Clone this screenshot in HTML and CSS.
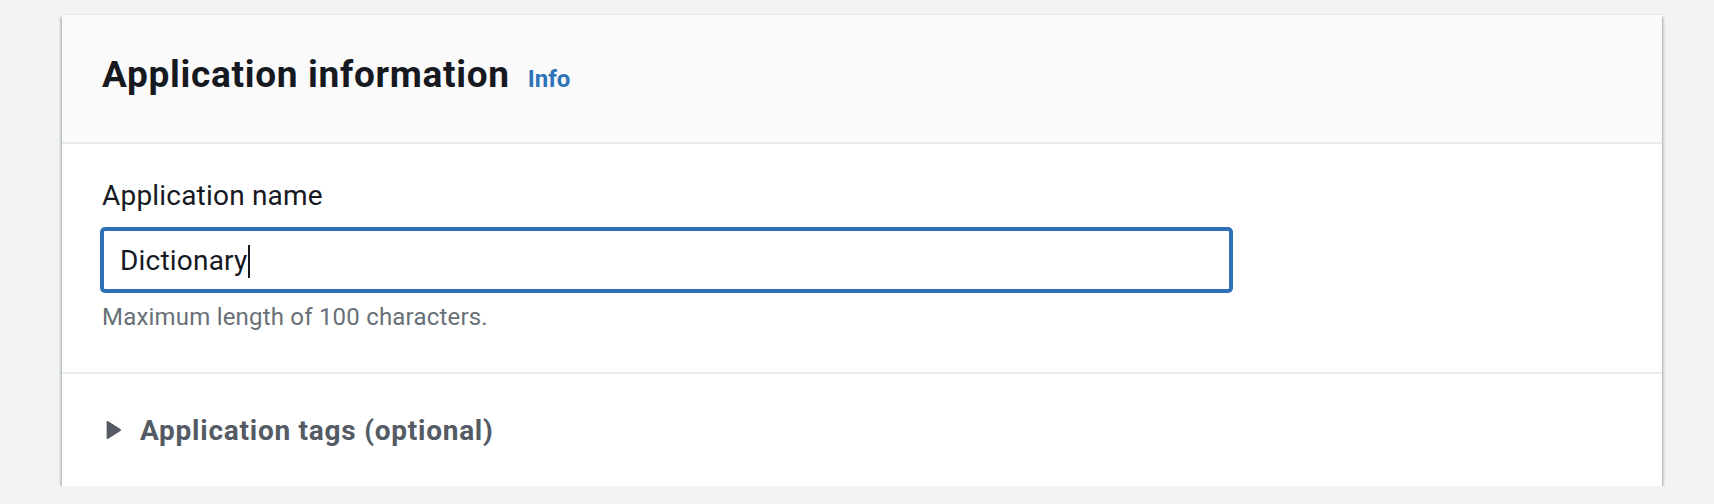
FILE: index.html
```html
<!DOCTYPE html>
<html lang="en">
<head>
<meta charset="utf-8">
<title>Application information</title>
<link rel="stylesheet" href="styles.css">
</head>
<body>
<div class="page">
  <section class="card">
    <header class="card-header">
      <h2 class="card-title"><span class="title-text">Application information</span><a class="info-link" href="#">Info</a></h2>
    </header>
    <div class="card-body">
      <label class="field-label" for="app-name">Application name</label>
      <div class="input" id="app-name"><span class="input-value">Dictionary</span><span class="caret"></span></div>
      <div class="field-hint">Maximum length of 100 characters.</div>
    </div>
    <div class="card-footer">
      <svg class="caret-icon" width="16" height="20" viewBox="0 0 16 20" aria-hidden="true"><path d="M2.3 1.2 L14.4 8.9 Q15.8 10 14.4 11.1 L2.3 18.8 Q0.6 19.7 0.6 17.8 L0.6 2.2 Q0.6 0.3 2.3 1.2 Z" fill="#545b64"/></svg>
      <span class="footer-text">Application tags (optional)</span>
    </div>
  </section>
</div>
</body>
</html>
```
FILE: styles.css
```css
* { box-sizing: border-box; }
html, body { margin: 0; padding: 0; }
body {
  background: #f2f3f3;
  font-family: Roboto, "Noto Sans", "Liberation Sans", sans-serif;
  color: #16191f;
}
.page {
  padding: 15px 52px 0 62px;
}
.card {
  background: #ffffff;
  height: 471px;
  box-shadow: 0 2px 2px 0 rgba(0, 28, 36, 0.3), 2px 2px 2px 0 rgba(0, 28, 36, 0.15), -2px 2px 2px 0 rgba(0, 28, 36, 0.15), 0 -1px 0 0 #e4e7e7;
  display: flex;
  flex-direction: column;
}
.card-header {
  background: #fafafa;
  height: 129px;
  flex: none;
  border-bottom: 2px solid #eaeded;
  display: flex;
  align-items: center;
  padding: 0 40px 4px 40px;
}
.card-title {
  margin: 0;
  line-height: 44px;
  font-size: 37px;
  font-weight: 700;
  letter-spacing: 0.7px;
  color: #16191f;
}
.info-link {
  font-size: 24px;
  font-weight: 700;
  letter-spacing: 0;
  color: #2f73b8;
  text-decoration: none;
  margin-left: 18px;
}
.card-body {
  height: 230px;
  flex: none;
  border-bottom: 2px solid #eaeded;
  padding: 30px 40px 0 40px;
  display: flex;
  flex-direction: column;
  align-items: flex-start;
}
.field-label {
  font-size: 28px;
  line-height: 44px;
  color: #16191f;
  letter-spacing: 0.2px;
}
.input {
  margin-top: 11px;
  width: 1129px;
  height: 62px;
  border: 2px solid #2f71b6;
  box-shadow: 0 0 0 2px #2f71b6;
  border-radius: 3px;
  background: #ffffff;
  display: flex;
  align-items: center;
  padding: 0 16px;
  font-size: 28px;
  color: #16191f;
}
.input-value { letter-spacing: 0.2px; }
.caret {
  display: inline-block;
  width: 2px;
  height: 33px;
  background: #16191f;
  margin-left: 1px;
  margin-top: 2px;
}
.field-hint {
  margin-top: 6px;
  font-size: 24px;
  line-height: 40px;
  color: #687078;
  letter-spacing: 0.2px;
}
.card-footer {
  flex: 1;
  display: flex;
  align-items: center;
  padding: 0 40px 0 44px;
}
.caret-icon {
  flex: none;
  margin-right: 18px;
}
.footer-text {
  font-size: 28px;
  font-weight: 700;
  letter-spacing: 0.75px;
  color: #545b64;
}
```
